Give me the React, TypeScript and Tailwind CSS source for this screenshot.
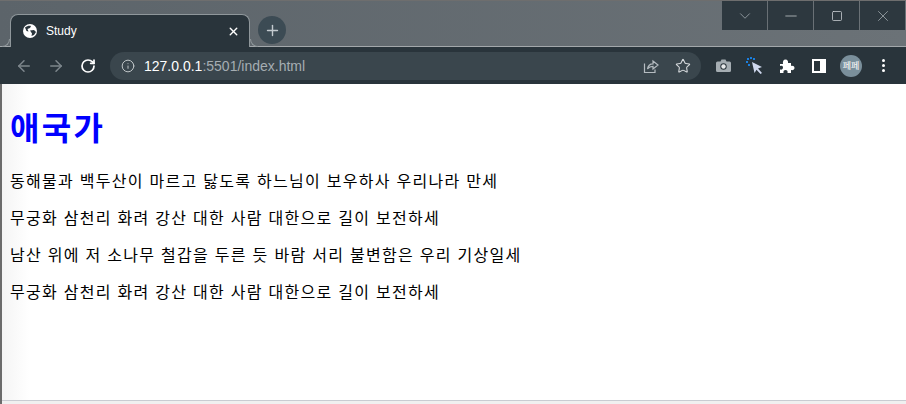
import { ArrowLeft, ArrowRight, ChevronDown, Info, Minus, Plus, RotateCw, Square, Star, X } from "lucide-react";

const lines = [
  "동해물과 백두산이 마르고 닳도록 하느님이 보우하사 우리나라 만세",
  "무궁화 삼천리 화려 강산 대한 사람 대한으로 길이 보전하세",
  "남산 위에 저 소나무 철갑을 두른 듯 바람 서리 불변함은 우리 기상일세",
  "무궁화 삼천리 화려 강산 대한 사람 대한으로 길이 보전하세",
];

const Globe = () => (
  <svg width="14" height="14" viewBox="0 0 14 14" className="shrink-0">
    <circle cx="7" cy="7" r="7" fill="#fff" />
    <path d="M2 3.5 C4 2 6 1.5 8 2 L7 4 L4.5 5 L5.5 7.5 L3.5 7 Z" fill="#29343b" />
    <path d="M7 6.5 L11 6 L13 8 L11 11 L8.5 12 L9 9.5 Z" fill="#29343b" />
  </svg>
);

const Share = () => (
  <svg width="16" height="16" viewBox="0 0 16 16" fill="none" stroke="#b5bcc1" strokeWidth="1.2">
    <path d="M1.5 5.5 V14.5 H12 V11.5" />
    <path d="M4.5 11 C5 7.5 7.5 5.8 10 5.8 V3 L15 7 L10 11 V8.3 C8 8.3 6 9 4.5 11 Z" />
  </svg>
);

const CameraIcon = () => (
  <svg width="15" height="13" viewBox="0 0 15 13">
    <path d="M1.5 2.5 H4.5 L5.5 0.5 H9.5 L10.5 2.5 H13.5 Q15 2.5 15 4 V11.5 Q15 13 13.5 13 H1.5 Q0 13 0 11.5 V4 Q0 2.5 1.5 2.5 Z" fill="#a5adb2" />
    <circle cx="7.5" cy="7.5" r="3.2" fill="#29343b" />
    <circle cx="7.5" cy="7.5" r="2.2" fill="#e8eaeb" />
  </svg>
);

const Cursor = () => (
  <svg width="18" height="18" viewBox="0 0 18 18">
    <path d="M6 5 L16 10 L12 11.5 L16 16 L14.5 17 L10.5 12.8 L8.5 16 Z" fill="#cfd8ee" />
    <g fill="#1a7fe0">
      <rect x="4" y="0" width="2" height="2" />
      <rect x="0" y="4" width="2" height="2" />
      <rect x="1" y="1" width="2" height="2" />
      <rect x="7" y="1" width="2" height="2" />
      <rect x="2" y="7" width="2" height="2" />
    </g>
  </svg>
);

const Puzzle = () => (
  <svg width="16" height="16" viewBox="0 0 16 16" fill="#fff">
    <path d="M1 6 H4 C3.5 3.5 4.5 1.5 6.5 1.5 C8.5 1.5 9.5 3.5 9 5 H12 V8 C14 7.5 15.5 8.5 15.5 10 C15.5 11.5 14 12.5 12 12 V15 H8.5 C9 13 8 12 6.5 12 C5 12 4 13 4.5 15 H1 V11.5 C3 12 4 11 4 9.5 C4 8 3 7.5 1 8 Z" />
  </svg>
);

export default function App() {
  return (
    <div className="flex h-[404px] w-[906px] flex-col overflow-hidden bg-white font-['Noto_Sans','Noto_Sans_CJK_KR',sans-serif]">
      {/* title bar */}
      <div className="flex h-[47px] shrink-0 justify-between border-t border-b border-t-[#6e6e6e] border-b-[#a3a8ab] bg-gradient-to-r from-[#5c646a] to-[#6b7277] pl-[2px] pr-[1px]">
        <div className="flex items-end pl-[8px]">
          <div className="relative flex h-[33px] w-[240px] items-center rounded-t-[8px] border-x border-t border-[#8f979b] border-b-0 bg-[#29343b] pl-[12px] pr-[9px] mb-[-1px]">
            <div className="absolute -left-[9px] bottom-0 h-[8px] w-[8px] rounded-br-[8px] border-r border-b border-[#8f979b]" />
            <div className="absolute -right-[9px] bottom-0 h-[8px] w-[8px] rounded-bl-[8px] border-l border-b border-[#8f979b]" />
            <Globe />
            <span className="ml-[9px] flex-1 text-[12px] leading-none text-white font-['Liberation_Sans',sans-serif]">Study</span>
            <X size={13} strokeWidth={2.6} color="#fff" />
          </div>
          <div className="mb-[2px] ml-[8px] flex h-[28px] w-[28px] items-center justify-center rounded-full bg-[#3c4b54]">
            <Plus size={17} strokeWidth={2} color="#c3cacf" />
          </div>
        </div>
        <div className="flex h-[29px] items-stretch gap-px">
          <div className="flex w-[45px] items-center justify-center bg-[#2d383f]">
            <ChevronDown size={18} strokeWidth={1} color="#a8b0b5" />
          </div>
          <div className="flex w-[45px] items-center justify-center bg-[#2d383f]">
            <Minus size={18} strokeWidth={1} color="#c8cdd0" />
          </div>
          <div className="flex w-[45px] items-center justify-center bg-[#2d383f]">
            <Square size={12} strokeWidth={1.6} color="#c8cdd0" />
          </div>
          <div className="flex w-[45px] items-center justify-center bg-[#2d383f]">
            <X size={18} strokeWidth={1} color="#a8b0b5" />
          </div>
        </div>
      </div>

      {/* toolbar */}
      <div className="flex h-[37px] shrink-0 items-center bg-[#29343b] pl-[15px]">
        <ArrowLeft size={18} strokeWidth={2} color="#7d868c" />
        <ArrowRight size={18} strokeWidth={2} color="#7d868c" className="ml-[14px]" />
        <RotateCw size={16} strokeWidth={2.6} color="#fff" className="ml-[15px]" />
        <div className="ml-[14px] flex h-[28px] w-[591px] items-center rounded-full bg-[#3a464d] pl-[11px]">
          <Info size={14} strokeWidth={1.6} color="#c8cdd0" />
          <span className="ml-[9px] flex-1 text-[14px] leading-none text-[#a5adb2] font-['Liberation_Sans',sans-serif]">
            <span className="text-white">127.0.0.1</span>:5501/index.html
          </span>
          <Share />
          <Star size={16} strokeWidth={1.6} color="#d5d9dc" className="ml-[16px] mr-[10px]" />
        </div>
        <div className="ml-[6px] flex items-center">
          <div className="flex w-[32px] items-center justify-center"><CameraIcon /></div>
          <div className="flex w-[32px] items-center justify-center"><Cursor /></div>
          <div className="flex w-[32px] items-center justify-center"><Puzzle /></div>
          <div className="flex w-[32px] items-center justify-center">
            <div className="flex h-[14px] w-[14px] border-2 border-white bg-[#29343b]">
              <div className="ml-auto h-full w-[4px] bg-white" />
            </div>
          </div>
          <div className="flex w-[32px] items-center justify-center">
            <div className="flex h-[22px] w-[22px] items-center justify-center rounded-full bg-[#7a8f9b] text-[9px] leading-none text-white">
              페페
            </div>
          </div>
          <div className="flex w-[33px] flex-col items-center justify-center gap-[2px]">
            <div className="h-[3px] w-[3px] rounded-full bg-white" />
            <div className="h-[3px] w-[3px] rounded-full bg-white" />
            <div className="h-[3px] w-[3px] rounded-full bg-white" />
          </div>
        </div>
      </div>

      {/* page */}
      <div className="flex min-h-0 flex-1 border-l-2 border-[#6b6b6b]">
        <div className="flex flex-1 flex-col border-b border-[#c9ccd2] bg-gradient-to-r from-[#f4f4f4] via-white via-[3%] to-white px-[8px] pt-[23px] font-['Noto_Sans_CJK_KR','Noto_Sans',sans-serif]">
          <h1 className="mb-[25px] text-[32px] leading-[38px] font-bold tracking-[2.3px] text-[#0000ff]">애국가</h1>
          {lines.map((line, i) => (
            <p key={i} className="mb-[16px] text-[16px] leading-[21px] tracking-[1.26px] [word-spacing:0.97px] text-black">{line}</p>
          ))}
        </div>
      </div>
      <div className="h-[3px] shrink-0 border-l-2 border-[#6b6b6b] bg-[#f0f0f0]" />
    </div>
  );
}
